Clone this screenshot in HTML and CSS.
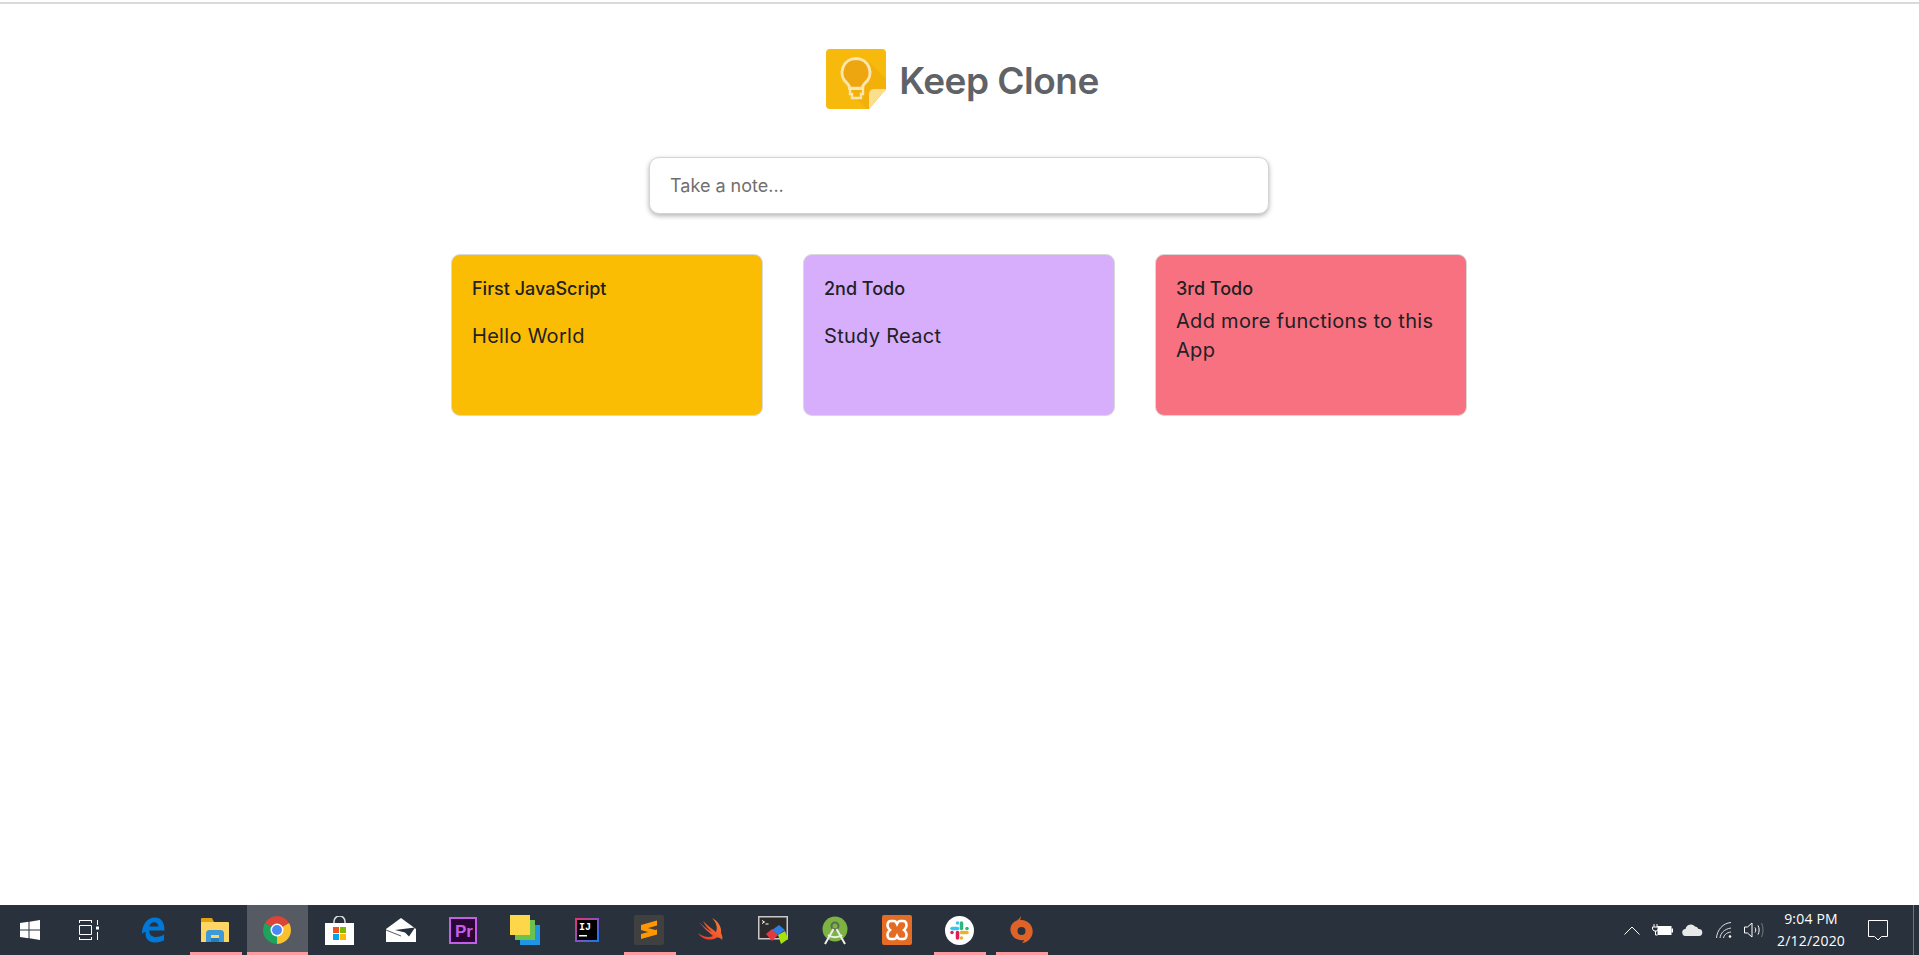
FILE: index.html
```html
<!DOCTYPE html>
<html lang="en">
<head>
<meta charset="utf-8">
<title>Keep Clone</title>
<link rel="stylesheet" href="styles.css">
</head>
<body>
<div class="topline"></div>
<main class="app">
  <header class="brand">
    <svg class="brand-logo" width="60" height="60" viewBox="0 0 60 60">
      <path d="M4 0H56a4 4 0 0 1 4 4V40L43 60H4a4 4 0 0 1-4-4V4a4 4 0 0 1 4-4z" fill="#f7b90c"/>
      <path d="M22 42L41 60H43L60 40V30L42 12z" fill="#f0a90a" opacity=".55"/>
      <path d="M60 40L43 60V45a5 5 0 0 1 5-5z" fill="#fbdf8e"/>
      <path d="M30 9.500a14 14 0 0 0-9 24.700c1.500 1.300 2.500 2.800 2.500 5h13c0-2.200 1-3.700 2.500-5a14 14 0 0 0-9-24.700z" fill="#eda60f" stroke="#fbe6ae" stroke-width="3"/>
      <path d="M24 39.500h13v5.500h-2v4h-9v-4h-2z" fill="none" stroke="#fbe6ae" stroke-width="2.400"/>
    </svg>
    <h1 class="brand-name">Keep Clone</h1>
  </header>
  <form class="composer">
    <input class="composer-input" type="text" placeholder="Take a note...">
  </form>
  <section class="notes">
    <article class="note note-yellow">
      <h2 class="note-title">First JavaScript</h2>
      <div class="note-body"><p>Hello World</p></div>
    </article>
    <article class="note note-purple">
      <h2 class="note-title">2nd Todo</h2>
      <div class="note-body"><p>Study React</p></div>
    </article>
    <article class="note note-red">
      <h2 class="note-title">3rd Todo</h2>
      <div class="note-body"><p>Add more functions to this App</p></div>
    </article>
  </section>
</main>
<footer class="taskbar">
  <div class="apps">
    <div class="app-cell start">
      <svg width="20" height="20" viewBox="0 0 20 20" fill="#fff"><path d="M0 3l8.500-1.200v7.700H0zM9.500 1.700L20 0v9.500H9.500zM0 10.500h8.500v7.700L0 17zM9.500 10.500H20V20L9.500 18.300z"/></svg>
    </div>
    <div class="app-cell">
      <svg class="shift-left" width="20" height="20" viewBox="0 0 20 20" fill="none" stroke="#fff" stroke-width="1"><path d="M0 .5h13M0 19.500h13M.5 0v3M12.500 0v3M.5 17v3M12.500 17v3M.5 5.500h12v9H.5zM18.500 0v5M18.500 12v8"/><rect x="17" y="6.500" width="3" height="3" fill="#fff" stroke="none"/></svg>
    </div>
    <div class="app-cell">
      <svg width="24" height="26" viewBox="0 0 25 26"><path d="M1 17C1 7.500 6.500 0 14.500 0 20.500 0 24.500 4.500 24.500 13.500H8.500c0 4.500 3 6.800 7 6.800 3.500 0 6.500-1.200 8.500-2.600v6c-2 1.200-5 2.300-9 2.300C6 26 4 20 5 15 3.500 15.500 1.800 16 1 17zM8.700 9.300h9.400C18 6.500 16.400 4.800 13.800 4.800c-2.600 0-4.500 1.900-5.100 4.500z" fill="#0078d7"/></svg>
    </div>
    <div class="app-cell running">
      <svg width="28" height="24" viewBox="0 0 28 24"><path d="M0 1a1 1 0 0 1 1-1h10l2 4H0z" fill="#e0a40e"/><path d="M0 4h27a1 1 0 0 1 1 1v19H0z" fill="#fdd663"/><path d="M5 24v-8.500A3.500 3.500 0 0 1 8.500 12h11a3.500 3.500 0 0 1 3.500 3.500V24h-5v-7h-8v7z" fill="#3c99dc"/><rect x="10" y="20" width="8" height="4" fill="#1f7fc1"/></svg>
    </div>
    <div class="app-cell active">
      <svg width="28" height="28" viewBox="0 0 28 28"><path d="M14 14L1.880 7A14 14 0 0 1 26.120 7z" fill="#db4437"/><path d="M14 14L26.120 7A14 14 0 0 1 14 28z" fill="#fbc02d"/><path d="M14 14L14 28A14 14 0 0 1 1.880 7z" fill="#1da35c"/><circle cx="14" cy="14" r="6.500" fill="#fff"/><circle cx="14" cy="14" r="5" fill="#4a8af4"/></svg>
    </div>
    <div class="app-cell">
      <svg width="29" height="29" viewBox="0 0 29 29"><path d="M9 9V5.500a5.500 5.500 0 0 1 11 0V9" fill="none" stroke="#ddd" stroke-width="1.500"/><rect y="7" width="29" height="22" fill="#fff"/><rect x="8" y="11" width="6" height="6" fill="#f25022"/><rect x="15" y="11" width="6" height="6" fill="#7fba00"/><rect x="8" y="18" width="6" height="6" fill="#00a4ef"/><rect x="15" y="18" width="6" height="6" fill="#ffb900"/></svg>
    </div>
    <div class="app-cell">
      <svg width="30" height="24" viewBox="0 0 30 24"><path d="M15 0L30 11V24H0V11z" fill="#fff"/><path d="M9 12L29 9.500 23 18.500 19 14.500z" fill="#29323c"/><path d="M0 12L15 18" stroke="#29323c" stroke-width=".8"/></svg>
    </div>
    <div class="app-cell">
      <svg width="28" height="27" viewBox="0 0 28 27"><rect x="1" y="1" width="26" height="25" fill="#2a0634" stroke="#c45de8" stroke-width="2"/><text class="pr-text" x="6" y="20">Pr</text></svg>
    </div>
    <div class="app-cell">
      <svg width="30" height="30" viewBox="0 0 30 30"><rect x="10" y="10" width="20" height="20" fill="#1f96e3"/><rect x="5" y="5" width="20" height="20" fill="#6cc24a"/><rect width="20" height="20" fill="#fdd649"/></svg>
    </div>
    <div class="app-cell">
      <svg width="24" height="24" viewBox="0 0 24 24"><defs><linearGradient id="ij" x1="0" y1="0" x2="1" y2="1"><stop offset="0" stop-color="#f0306e"/><stop offset=".5" stop-color="#8b4fc0"/><stop offset="1" stop-color="#087cfa"/></linearGradient></defs><rect width="24" height="24" fill="url(#ij)"/><rect x="2" y="2" width="20" height="20" fill="#000"/><text class="ij-text" x="4" y="12">IJ</text><rect x="4" y="17" width="8" height="1.500" fill="#fff"/></svg>
    </div>
    <div class="app-cell running">
      <svg width="30" height="30" viewBox="0 0 30 30"><rect width="30" height="30" rx="2" fill="#404040"/><path d="M23 5.500V10.500L7 15V10zM7 11L23 15.500V19.500L7 15zM23 14.500V19.500L7 24V19z" fill="#ff9800"/></svg>
    </div>
    <div class="app-cell">
      <svg width="26" height="24" viewBox="0 0 26 24"><defs><linearGradient id="swift" x1="1" y1="0" x2="0" y2="1"><stop offset="0" stop-color="#f88a36"/><stop offset="1" stop-color="#ee2c24"/></linearGradient></defs><path d="M0 15C5 19 11 20 15 18 10 14 5 9 1 4 5 8 10 12 14 14 10 11 7 7 5 3 9 7 14 11 18 14 20 9 18 4 14 0 20 3 24 9 23 15 24 17 25 20 24 22 23 20 20 19 18 20 13 23 4 22 0 15z" fill="url(#swift)"/></svg>
    </div>
    <div class="app-cell">
      <svg width="30" height="29" viewBox="0 0 30 29"><rect x=".75" y=".75" width="28.500" height="22" fill="#2b2b2b" stroke="#c9c9c9" stroke-width="1.500"/><path d="M4 4.500l2.500 1.500-2.500 1.500M7.500 8h3" fill="none" stroke="#fff" stroke-width="1"/><path d="M8 18L14 13 20 19 14 25z" fill="#e23a3f"/><path d="M14 14L21 9 27 14 20 19z" fill="#2c7de0"/><path d="M20 19L27 15 30 23 23 28z" fill="#a8e010"/></svg>
    </div>
    <div class="app-cell">
      <svg width="26" height="29" viewBox="0 0 26 29"><circle cx="13" cy="13" r="12.500" fill="#7cb342"/><circle cx="13" cy="10" r="3.500" fill="none" stroke="#5d6b57" stroke-width="2"/><path d="M11.500 13L3 28M14.500 13L23 28M6 19c4 3 10 3 14 0" fill="none" stroke="#ecf0e6" stroke-width="2"/></svg>
    </div>
    <div class="app-cell">
      <svg width="30" height="30" viewBox="0 0 30 30"><rect width="30" height="30" rx="2" fill="#e46c24"/><path d="M9 6h3c2 0 2.500 2 3 3 .5-1 1-3 3-3h3c2.500 0 3.500 2 3.500 4.500S23 14 22 15c1 1 2.500 2 2.500 4.500S23.500 24 21 24h-3c-2 0-2.500-2-3-3-.5 1-1 3-3 3H9c-2.500 0-3.500-2-3.500-4.500S7 16 8 15c-1-1-2.500-2-2.500-4.500S6.500 6 9 6z" fill="none" stroke="#fff" stroke-width="2.600"/></svg>
    </div>
    <div class="app-cell running">
      <svg width="29" height="29" viewBox="0 0 29 29"><circle cx="14.500" cy="14.500" r="14.500" fill="#fff"/><g fill="none" stroke-width="3.500" stroke-linecap="round"><path d="M12.500 12.500H7" stroke="#36c5f0"/><path d="M12.500 7v0" stroke="#36c5f0"/><path d="M16.500 12.500V7" stroke="#2eb67d"/><path d="M22 12.500h0" stroke="#2eb67d"/><path d="M16.500 16.500H22" stroke="#ecb22e"/><path d="M16.500 22v0" stroke="#ecb22e"/><path d="M12.500 16.500V22" stroke="#e01e5a"/><path d="M7 16.500h0" stroke="#e01e5a"/></g></svg>
    </div>
    <div class="app-cell running">
      <svg width="23" height="29" viewBox="0 0 23 29"><path fill-rule="evenodd" d="M11 0c0 2-.5 3-1 4C13 3.500 17 4.500 20 8c4 5 3.500 12-1 16-2 2-5 3-7 3 1-1 2-2 2-3-5 1-10-1-12.500-6C-1 13 1 7 6 5c2-1 4-3 5-5zM11.500 11a4 4 0 1 0 0 8 4 4 0 0 0 0-8z" fill="#df6329"/></svg>
    </div>
  </div>
  <div class="tray">
    <svg class="tray-icon chevron" width="16" height="9" viewBox="0 0 16 9" fill="none" stroke="#fff"><path d="M.5 8.500L8 1l7.500 7.500"/></svg>
    <svg class="tray-icon battery" width="21" height="12" viewBox="0 0 21 12"><path d="M2 0v3M5 0v3M.5 3h6v2L5 7H2L.5 5zM3.500 7v4h2" fill="none" stroke="#fff"/><rect x="6" y="2.500" width="13" height="8" fill="#fff" stroke="#fff"/><rect x="19.500" y="4.500" width="1.500" height="4" fill="#fff"/></svg>
    <svg class="tray-icon cloud" width="21" height="12" viewBox="0 0 21 12"><path d="M4 12a3.500 3.500 0 0 1-.5-7A5.500 5.500 0 0 1 13 2.500 4 4 0 0 1 16.500 5 3.500 3.500 0 0 1 17 12z" fill="#e8e8e8"/></svg>
    <svg class="tray-icon wifi" width="16" height="16" viewBox="0 0 16 16" fill="none" stroke="#ddd"><path d="M.5 16C1 8 7 1 15 .5" /><path d="M4 16c.5-5 4.500-9 11-10"/><path d="M7.500 16c.5-3 3-5.500 7.500-6"/><circle cx="14" cy="14.500" r="1.300" fill="#fff" stroke="none"/></svg>
    <svg class="tray-icon speaker" width="20" height="16" viewBox="0 0 20 16" fill="none" stroke="#fff"><path d="M.5 5h3L8 1v14L3.500 11h-3z"/><path d="M11 5.500c1 1.500 1 3.500 0 5M14 3.500c1.500 2.500 1.500 6.500 0 9"/><path d="M17.500 1c2 4 2 10 0 14" stroke="#777"/></svg>
    <div class="clock"><span>9:04 PM</span><span>2/12/2020</span></div>
    <svg class="tray-icon bubble" width="20" height="21" viewBox="0 0 20 21" fill="none" stroke="#fff"><path d="M.5.500h19v16h-6L10 20l-3.500-3.500h-6z"/></svg>
    <div class="show-desktop"></div>
  </div>
</footer>
</body>
</html>
```
FILE: styles.css
```css
* { box-sizing: border-box; }
html, body { height: 100%; }
body {
  margin: 0;
  display: flex;
  flex-direction: column;
  height: 955px;
  overflow: hidden;
  background: #fff;
  font-family: Inter, "Liberation Sans", sans-serif;
  color: #202124;
}
.topline { height: 2px; margin-top: 2px; background: #d9d9de; flex: none; }
.app { flex: 1; display: flex; flex-direction: column; align-items: center; padding-top: 45px; padding-right: 1px; }
.brand { display: flex; align-items: center; gap: 13px; height: 60px; padding-left: 7px; }
.brand-logo { display: block; flex: none; }
.brand-name { margin: 3px 0 0; font-size: 37px; font-weight: 600; letter-spacing: -.5px; color: #5f6368; line-height: 57px; }
.composer { margin-top: 48px; width: 620px; height: 57px; flex: none; }
.composer-input {
  display: block;
  width: 100%;
  height: 100%;
  padding: 0 20px 1px;
  border: 1px solid #d4d4d4;
  border-radius: 10px;
  outline: none;
  background: #fff;
  box-shadow: 0 2px 5px rgba(0,0,0,.3);
  font-family: inherit;
  font-size: 18px;
}
.composer-input::placeholder { color: #6f6f6f; opacity: 1; }
.notes { display: flex; gap: 40px; margin-top: 40px; }
.note {
  width: 312px;
  height: 162px;
  padding: 22px 20px 18px;
  border: 1px solid #d9d9d9;
  border-radius: 9px;
  display: flex;
  flex-direction: column;
}
.note-yellow { background: #fbbc04; }
.note-purple { background: #d7aefb; }
.note-red { background: #f87180; }
.note-title { margin: 0; font-size: 18px; font-weight: 500; line-height: 24px; }
.note-body { height: 70px; display: flex; align-items: center; }
.note-body p { margin: 0; font-size: 20px; font-weight: 400; letter-spacing: .3px; line-height: 29px; }
.taskbar { flex: none; height: 50px; display: flex; justify-content: space-between; background: #29323c; color: #fff; }
.apps { display: flex; }
.app-cell { position: relative; width: 62px; height: 50px; padding-right: 2px; display: flex; align-items: center; justify-content: center; }
.app-cell svg { display: block; }
.start { width: 61px; }
.shift-left { margin-right: 4px; }
.running::after { content: ""; position: absolute; left: 5px; right: 5px; bottom: 0; height: 3px; background: #fc9ca0; }
.active { width: 61px; margin-right: 1px; background: #565a63; }
.active::after { content: ""; position: absolute; left: 0; right: 0; bottom: 0; height: 3px; background: #fc9ca0; }
.pr-text { font: 700 17px "Liberation Sans", sans-serif; fill: #c45de8; }
.ij-text { font: 700 10px "Liberation Mono", monospace; fill: #fff; }
.tray { display: flex; align-items: center; }
.tray-icon { display: block; flex: none; }
.chevron { margin-right: 12px; }
.battery { margin-right: 9px; }
.cloud { margin-right: 13px; }
.wifi { margin-right: 12px; }
.clock { width: 80px; margin-left: 7px; margin-right: 17px; display: flex; flex-direction: column; align-items: center; gap: 4px; font: 400 14px/18px "Open Sans", sans-serif; letter-spacing: .2px; color: #fff; }
.bubble { margin-right: 25px; }
.show-desktop { width: 1px; height: 50px; margin-right: 5px; background: #6d737a; }
```
